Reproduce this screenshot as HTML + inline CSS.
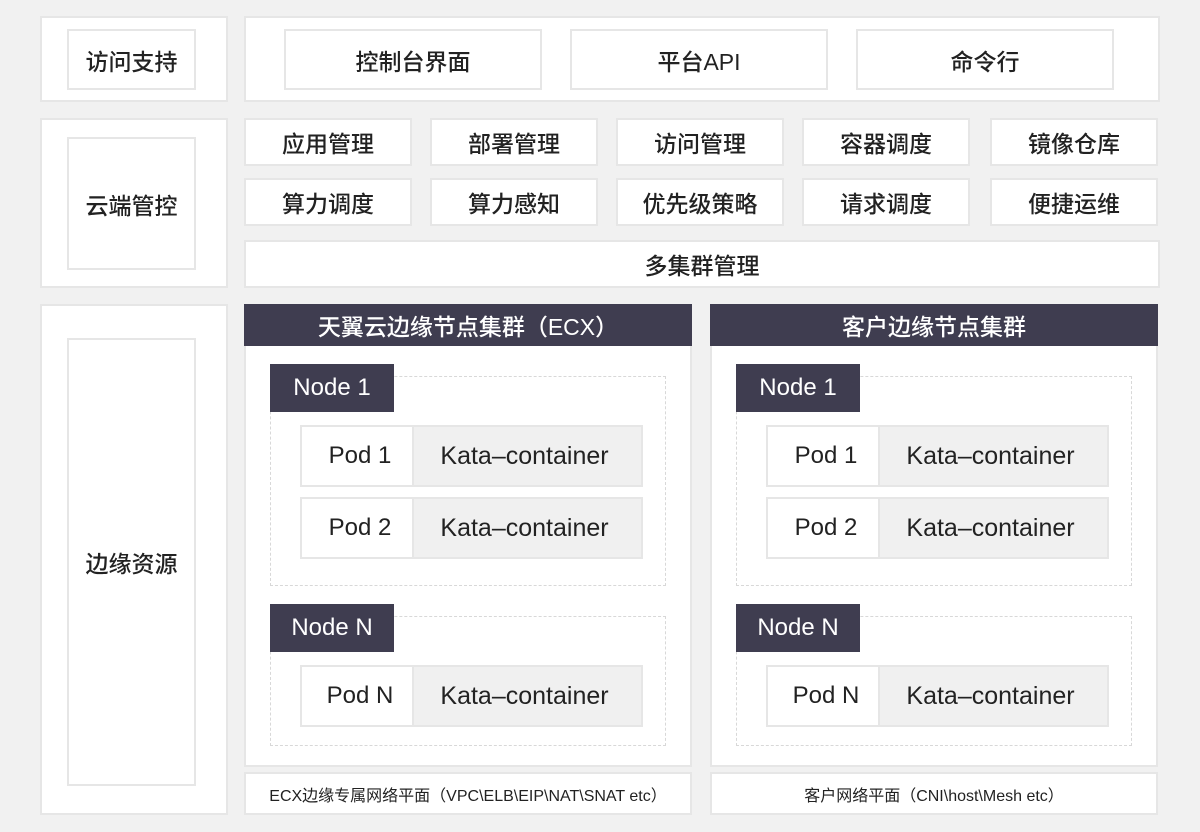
<!DOCTYPE html>
<html><head><meta charset="utf-8"><style>
body{margin:0;width:1200px;height:832px;background:#f1f1f1;position:relative;overflow:hidden;font-family:"Liberation Sans","Noto Sans CJK SC",sans-serif;color:#222}
.b{position:absolute;background:#fff;border:2px solid #e6e6e6;box-sizing:border-box;display:flex;align-items:center;justify-content:center;font-size:23px;font-weight:500}
.d{position:absolute;background:#3f3d50;color:#fff;display:flex;align-items:center;justify-content:center;box-sizing:border-box;font-weight:500}
.dash{position:absolute;border:1px dashed #d8d8d8;box-sizing:border-box}
.pod{position:absolute;width:343px;height:62px;border:2px solid #e6e6e6;box-sizing:border-box;background:#fff;display:flex;font-size:24px}
.pod .a{width:112px;display:flex;align-items:center;justify-content:center;border-right:2px solid #e6e6e6;padding-left:6px;box-sizing:border-box}
.pod .k{flex:1;background:#f0f0f0;display:flex;align-items:center;justify-content:center;font-size:25px;padding-right:6px}
.f{font-size:16px;font-weight:400}
</style></head><body>
<div class="b" style="left:40px;top:16px;width:188px;height:86px"></div>
<div class="b" style="left:67px;top:29px;width:129px;height:61px">访问支持</div>
<div class="b" style="left:244px;top:16px;width:916px;height:86px"></div>
<div class="b" style="left:284px;top:29px;width:258px;height:61px">控制台界面</div>
<div class="b" style="left:570px;top:29px;width:258px;height:61px">平台API</div>
<div class="b" style="left:856px;top:29px;width:258px;height:61px">命令行</div>

<div class="b" style="left:40px;top:118px;width:188px;height:170px"></div>
<div class="b" style="left:67px;top:137px;width:129px;height:133px">云端管控</div>
<div class="b" style="left:244px;top:118px;width:168px;height:48px">应用管理</div>
<div class="b" style="left:430px;top:118px;width:168px;height:48px">部署管理</div>
<div class="b" style="left:616px;top:118px;width:168px;height:48px">访问管理</div>
<div class="b" style="left:802px;top:118px;width:168px;height:48px">容器调度</div>
<div class="b" style="left:990px;top:118px;width:168px;height:48px">镜像仓库</div>
<div class="b" style="left:244px;top:178px;width:168px;height:48px">算力调度</div>
<div class="b" style="left:430px;top:178px;width:168px;height:48px">算力感知</div>
<div class="b" style="left:616px;top:178px;width:168px;height:48px">优先级策略</div>
<div class="b" style="left:802px;top:178px;width:168px;height:48px">请求调度</div>
<div class="b" style="left:990px;top:178px;width:168px;height:48px">便捷运维</div>
<div class="b" style="left:244px;top:240px;width:916px;height:48px">多集群管理</div>

<div class="b" style="left:40px;top:304px;width:188px;height:511px"></div>
<div class="b" style="left:67px;top:338px;width:129px;height:448px">边缘资源</div>

<div class="b" style="left:244px;top:304px;width:448px;height:463px"></div>
<div class="d" style="left:244px;top:304px;width:448px;height:42px;font-size:23px">天翼云边缘节点集群（ECX）</div>
<div class="dash" style="left:270px;top:376px;width:396px;height:210px"></div>
<div class="d" style="left:270px;top:364px;width:124px;height:48px;font-size:24px">Node 1</div>
<div class="pod" style="left:300px;top:425px"><div class="a">Pod 1</div><div class="k">Kata–container</div></div>
<div class="pod" style="left:300px;top:497px"><div class="a">Pod 2</div><div class="k">Kata–container</div></div>
<div class="dash" style="left:270px;top:616px;width:396px;height:130px"></div>
<div class="d" style="left:270px;top:604px;width:124px;height:48px;font-size:24px">Node N</div>
<div class="pod" style="left:300px;top:665px"><div class="a">Pod N</div><div class="k">Kata–container</div></div>
<div class="b f" style="left:244px;top:772px;width:448px;height:43px">ECX边缘专属网络平面（VPC\ELB\EIP\NAT\SNAT etc）</div>

<div class="b" style="left:710px;top:304px;width:448px;height:463px"></div>
<div class="d" style="left:710px;top:304px;width:448px;height:42px;font-size:23px">客户边缘节点集群</div>
<div class="dash" style="left:736px;top:376px;width:396px;height:210px"></div>
<div class="d" style="left:736px;top:364px;width:124px;height:48px;font-size:24px">Node 1</div>
<div class="pod" style="left:766px;top:425px"><div class="a">Pod 1</div><div class="k">Kata–container</div></div>
<div class="pod" style="left:766px;top:497px"><div class="a">Pod 2</div><div class="k">Kata–container</div></div>
<div class="dash" style="left:736px;top:616px;width:396px;height:130px"></div>
<div class="d" style="left:736px;top:604px;width:124px;height:48px;font-size:24px">Node N</div>
<div class="pod" style="left:766px;top:665px"><div class="a">Pod N</div><div class="k">Kata–container</div></div>
<div class="b f" style="left:710px;top:772px;width:448px;height:43px">客户网络平面（CNI\host\Mesh etc）</div>
</body></html>
